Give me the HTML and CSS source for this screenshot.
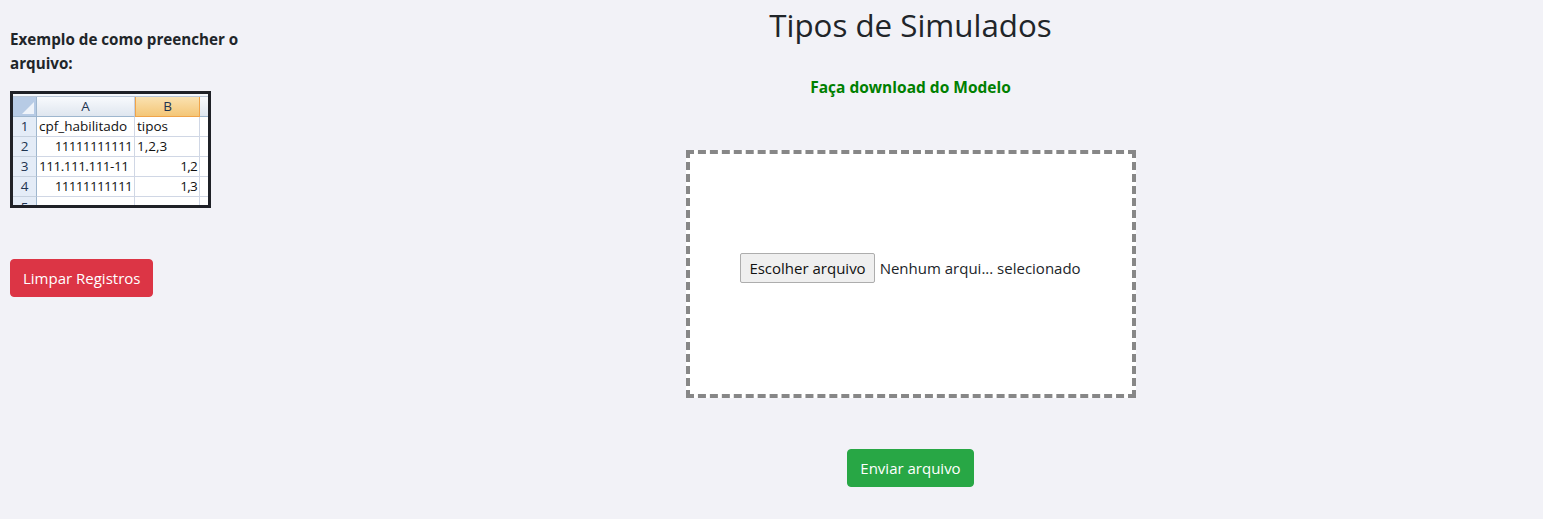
FILE: index.html
```html
<!DOCTYPE html>
<html lang="pt-BR">
<head>
<meta charset="utf-8">
<title>Tipos de Simulados</title>
<link rel="stylesheet" href="styles.css">
</head>
<body>
<div class="page">
  <aside class="sidebar">
    <p class="example-title">Exemplo de como preencher o<br>arquivo:</p>
    <div class="sheet">
      <div class="sheet-top"></div>
      <div class="sheet-grid">
        <div class="corner"><span class="corner-tri"></span></div>
        <div class="col-head">A</div>
        <div class="col-head col-sel">B</div>
        <div class="col-head col-rest"></div>

        <div class="row-head">1</div>
        <div class="cell">cpf_habilitado</div>
        <div class="cell">tipos</div>
        <div class="cell cell-rest"></div>

        <div class="row-head">2</div>
        <div class="cell num">11111111111</div>
        <div class="cell">1,2,3</div>
        <div class="cell cell-rest"></div>

        <div class="row-head">3</div>
        <div class="cell tight">111.111.111-11</div>
        <div class="cell num">1,2</div>
        <div class="cell cell-rest"></div>

        <div class="row-head">4</div>
        <div class="cell num">11111111111</div>
        <div class="cell num">1,3</div>
        <div class="cell cell-rest"></div>

        <div class="row-head row-cut">5</div>
        <div class="cell"></div>
        <div class="cell"></div>
        <div class="cell cell-rest"></div>
      </div>
    </div>
    <button class="btn btn-danger" type="button">Limpar Registros</button>
  </aside>

  <main class="main">
    <h2 class="title">Tipos de Simulados</h2>
    <a class="download" href="#">Faça download do Modelo</a>
    <div class="dropzone">
      <div class="file-input">
        <span class="file-btn">Escolher arquivo</span>
        <span class="file-name">Nenhum arqui... selecionado</span>
      </div>
    </div>
    <button class="btn btn-success" type="button">Enviar arquivo</button>
  </main>
</div>
</body>
</html>
```

FILE: styles.css
```css
* { box-sizing: border-box; }

html, body {
  margin: 0;
  padding: 0;
}

body {
  background: #f2f2f7;
  color: #212529;
  font-family: "Open Sans", "Noto Sans", sans-serif;
  font-size: 15px;
  line-height: 24px;
  height: 519px;
  overflow: hidden;
}

.page {
  display: grid;
  grid-template-columns: 278px 1fr;
}

/* ---------- sidebar ---------- */
.sidebar {
  padding: 27px 0 0 10px;
  display: flex;
  flex-direction: column;
  align-items: flex-start;
}

.example-title {
  margin: 0;
  font-size: 15.2px;
  font-weight: 700;
  line-height: 24px;
}

.sheet {
  margin-top: 16px;
  width: 201px;
  height: 117px;
  border: 3px solid #1f2127;
  background: #ffffff;
  overflow: hidden;
  font-family: "Open Sans", "Noto Sans", sans-serif;
  font-size: 13.5px;
  line-height: 19px;
  color: #111;
}

.sheet-top {
  height: 3px;
  background: #f4f7fb;
  border-bottom: 1px solid #b9c6d7;
}

.sheet-grid {
  display: grid;
  grid-template-columns: 24px 98px 65px 8px;
  grid-auto-rows: 20px;
}

.corner {
  position: relative;
  background: #b7cbe5;
  border-right: 1px solid #9eb6ce;
  border-bottom: 1px solid #9eb6ce;
}

.corner-tri {
  position: absolute;
  right: 2px;
  bottom: 2px;
  width: 0;
  height: 0;
  border-left: 12px solid transparent;
  border-bottom: 12px solid #eef3fa;
}

.col-head {
  background: linear-gradient(#f8fafd, #dfe6ef);
  border-right: 1px solid #c5d0de;
  border-bottom: 1px solid #9eb6ce;
  text-align: center;
  color: #1e3450;
  font-size: 13.5px;
}

.col-sel {
  background: linear-gradient(#fae2b1, #f4c677);
  border: 1px solid #f0a44a;
  border-top: none;
  line-height: 18px;
}

.col-rest {
  border-right: none;
}

.row-head {
  background: #e4ecf7;
  border-right: 1px solid #9eb6ce;
  border-bottom: 1px solid #c5d0de;
  text-align: center;
  color: #1e3450;
  font-size: 13.5px;
}

.row-cut {
  line-height: 21px;
}

.cell {
  border-right: 1px solid #d0d7e5;
  border-bottom: 1px solid #d0d7e5;
  padding: 0 2px;
  white-space: nowrap;
  overflow: hidden;
}

.cell.num {
  text-align: right;
  letter-spacing: -0.7px;
}

.cell.tight {
  letter-spacing: -0.5px;
}

.cell-rest { border-right: none; }

/* ---------- buttons ---------- */
.btn {
  display: inline-block;
  font-family: inherit;
  font-size: 15px;
  line-height: 24px;
  padding: 6px 12px;
  border: 1px solid transparent;
  border-radius: 4px;
  color: #fff;
  cursor: pointer;
}

.btn-danger {
  margin-top: 51px;
  background: #dc3545;
  border-color: #dc3545;
}

.btn-success {
  margin-top: 51px;
  background: #28a745;
  border-color: #28a745;
}

/* ---------- main ---------- */
.main {
  padding-top: 6px;
  display: flex;
  flex-direction: column;
  align-items: center;
}

.title {
  margin: 0;
  font-size: 31.3px;
  font-weight: 500;
  line-height: 38px;
  color: #212529;
}

.download {
  margin-top: 31px;
  color: #008000;
  font-size: 15.5px;
  font-weight: 700;
  text-decoration: none;
}

.dropzone {
  margin-top: 51px;
  width: 450px;
  height: 248px;
  border: 4px dashed #878787;
  background: #fff;
  padding-top: 99px;
  display: flex;
  justify-content: center;
  align-items: flex-start;
}

.file-input {
  display: flex;
  align-items: center;
  gap: 5px;
  height: 30px;
}

.file-btn {
  display: inline-block;
  height: 30px;
  line-height: 28px;
  padding: 0 8px;
  background: #efefef;
  border: 1px solid #adadad;
  border-radius: 2px;
  color: #111;
}

.file-name {
  color: #212529;
}
```
